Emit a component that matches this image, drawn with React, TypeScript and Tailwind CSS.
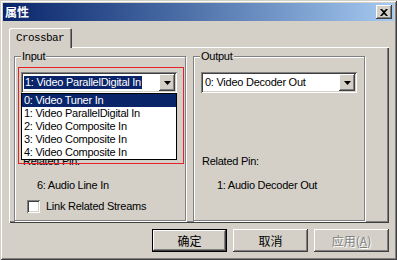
const raised =
  'shadow-[inset_-1px_-1px_0_#404040,inset_1px_1px_0_#ffffff,inset_-2px_-2px_0_#808080]';
const sunken =
  'shadow-[inset_1px_1px_0_#808080,inset_-1px_-1px_0_#ffffff,inset_2px_2px_0_#404040,inset_-2px_-2px_0_#d4d0c8]';

const inputs = [
  '0: Video Tuner In',
  '1: Video ParallelDigital In',
  '2: Video Composite In',
  '3: Video Composite In',
  '4: Video Composite In',
];

function Arrow() {
  return (
    <svg width="7" height="4" viewBox="0 0 7 4">
      <path d="M0 0h7L3.5 4z" fill="#000" />
    </svg>
  );
}

function Combo({ text, focused }: { text: string; focused?: boolean }) {
  return (
    <div className={`flex h-[21px] w-[156px] items-center justify-between bg-white p-[2px] ${sunken}`}>
      <span
        className={`ml-[1px] h-[13px] px-[1px] leading-[13px] whitespace-nowrap ${
          focused ? 'bg-[#0a246a] text-white' : 'text-black'
        }`}
      >
        {text}
      </span>
      <div className={`flex h-[17px] w-[16px] items-center justify-center bg-[#d4d0c8] ${raised}`}>
        <Arrow />
      </div>
    </div>
  );
}

function GroupBox({ label, children }: { label: string; children: React.ReactNode }) {
  return (
    <div className="relative h-[165px] w-[172px] border border-[#808080] shadow-[inset_1px_1px_0_#ffffff,1px_1px_0_#ffffff]">
      <span className="absolute -top-[7px] left-[6px] bg-[#d4d0c8] px-[1px] leading-[13px]">
        {label}
      </span>
      {children}
    </div>
  );
}

function Button({ children, primary, disabled }: { children?: React.ReactNode; primary?: boolean; disabled?: boolean }) {
  return (
    <div
      className={`flex h-[23px] w-[75px] items-center justify-center text-[12px] tracking-normal ${
        primary ? 'border border-black' : ''
      }`}
      style={{ fontFamily: '"Noto Sans CJK SC", "Liberation Sans", sans-serif' }}
    >
      <div className={`flex h-full w-full items-center justify-center bg-[#d4d0c8] ${raised}`}>
        {disabled ? (
          <span className="text-[#808080] [text-shadow:1px_1px_0_#ffffff]">
            应用(<span className="underline">A</span>)
          </span>
        ) : (
          <span className="text-black">{children}</span>
        )}
      </div>
    </div>
  );
}

export default function App() {
  return (
    <div
      className="h-[260px] w-[397px] bg-[#d4d0c8] p-[3px] text-[11px] tracking-[-0.25px] text-black shadow-[inset_1px_1px_0_#d4d0c8,inset_-1px_-1px_0_#404040,inset_2px_2px_0_#ffffff,inset_-2px_-2px_0_#808080]"
      style={{ fontFamily: '"Liberation Sans", Arial, sans-serif' }}
    >
      {/* title bar */}
      <div className="flex h-[18px] items-center justify-between bg-gradient-to-r from-[#0a246a] to-[#a6caf0] pr-[2px] pl-[2px]">
        <span
          className="text-[12px] leading-[14px] font-bold tracking-normal text-white"
          style={{ fontFamily: '"Noto Sans CJK SC", sans-serif' }}
        >
          属性
        </span>
        <div className={`flex h-[14px] w-[16px] items-center justify-center bg-[#d4d0c8] ${raised}`}>
          <svg width="8" height="7" viewBox="0 0 8 7">
            <path d="M0 0h2l2 2 2-2h2L5 3.5 8 7H6L4 5 2 7H0l3-3.5z" fill="#000" />
          </svg>
        </div>
      </div>

      <div className="ml-[6px] w-[380px] pt-[7px]">
        {/* tab strip */}
        <div className="relative z-10 -mb-[1px] flex h-[20px] w-[63px] items-center rounded-t-[2px] bg-[#d4d0c8] pl-[7px] shadow-[inset_1px_1px_0_#ffffff,inset_-1px_0_0_#404040,inset_-2px_0_0_#808080]">
          <span
            className="text-[11px] tracking-[-0.6px]"
            style={{ fontFamily: '"Liberation Mono", monospace' }}
          >
            Crossbar
          </span>
        </div>

        {/* tab page */}
        <div className="flex h-[176px] gap-[7px] pt-[9px] pl-[5px] shadow-[inset_1px_1px_0_#ffffff,inset_-1px_-1px_0_#404040,inset_-2px_-2px_0_#808080]">
          <GroupBox label="Input">
            <div className="pt-[15px] pl-[6px]">
              <Combo text="1: Video ParallelDigital In" focused />
              <div className="mt-[62px] pl-[2px] leading-[13px]">Related Pin:</div>
              <div className="mt-[11px] pl-[16px] leading-[13px]">6: Audio Line In</div>
              <div className="mt-[8px] flex items-center gap-[6px] pl-[6px]">
                <div className={`h-[13px] w-[13px] bg-white ${sunken}`} />
                <span className="leading-[13px]">Link Related Streams</span>
              </div>
            </div>

            {/* open drop-down list */}
            <div className="absolute top-[36px] left-[6px] w-[156px] border border-black bg-white">
              {inputs.map((i, n) => (
                <div
                  key={i}
                  className={`h-[13px] pl-[2px] leading-[13px] whitespace-nowrap ${
                    n === 0 ? 'bg-[#0a246a] text-white' : ''
                  }`}
                >
                  {i}
                </div>
              ))}
            </div>

            {/* annotation */}
            <div className="pointer-events-none absolute top-[10px] left-[3px] h-[97px] w-[166px] border border-[#e8202a]" />
          </GroupBox>

          <GroupBox label="Output">
            <div className="pt-[15px] pl-[7px]">
              <Combo text="0: Video Decoder Out" />
              <div className="mt-[62px] pl-[1px] leading-[13px]">Related Pin:</div>
              <div className="mt-[11px] pl-[16px] leading-[13px]">1: Audio Decoder Out</div>
            </div>
          </GroupBox>
        </div>

        {/* buttons */}
        <div className="mt-[6px] flex justify-end gap-[6px]">
          <Button primary>确定</Button>
          <Button>取消</Button>
          <Button disabled />
        </div>
      </div>
    </div>
  );
}
